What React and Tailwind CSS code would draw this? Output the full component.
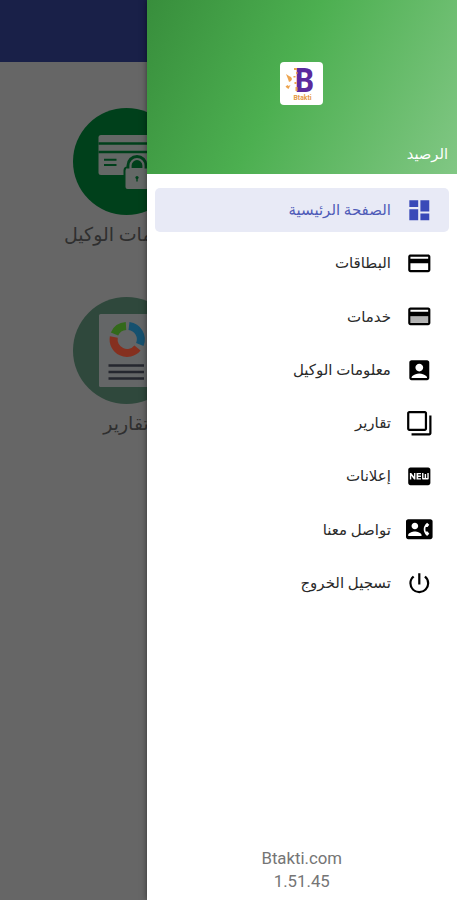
import {
  MdDashboard,
  MdOutlineCreditCard,
  MdAccountBox,
  MdFilterNone,
  MdFiberNew,
  MdContactPhone,
  MdPowerSettingsNew,
} from "react-icons/md";

function FilledCard({ className }) {
  return (
    <svg viewBox="0 0 24 24" fill="currentColor" className={className}>
      <path d="M4 12h16v6H4z" opacity="0.3" />
      <path d="M20 4H4c-1.110 0-1.990.890-1.990 2L2 18c0 1.110.890 2 2 2h16c1.110 0 2-.890 2-2V6c0-1.110-.890-2-2-2zm0 14H4v-6h16v6zm0-10H4V6h16v2z" />
    </svg>
  );
}

const MENU = [
  { label: "الصفحة الرئيسية", icon: MdDashboard, active: true, flip: true },
  { label: "البطاقات", icon: MdOutlineCreditCard },
  { label: "خدمات", icon: FilledCard },
  { label: "معلومات الوكيل", icon: MdAccountBox },
  { label: "تقارير", icon: MdFilterNone, flip: true },
  { label: "إعلانات", icon: MdFiberNew },
  { label: "تواصل معنا", icon: MdContactPhone },
  { label: "تسجيل الخروج", icon: MdPowerSettingsNew },
];

function Logo() {
  return (
    <svg viewBox="0 0 43 43" direction="ltr" className="w-[43px] h-[43px]">
      <rect width="43" height="43" rx="4" fill="#fff" />
      <text
        x="15"
        y="29.5"
        fontFamily="Roboto, sans-serif"
        fontSize="33"
        fontWeight="800"
        fill="#5b2a9d"
        textLength="19"
        lengthAdjust="spacingAndGlyphs"
      >
        B
      </text>
      <g fill="#eda550">
        <path d="M6 12l3 2 2 1 1 2-1 2-2 1-1-3z" />
        <path d="M5.500 24.500l2-1.500 1 1 2-1-1 2-1 2-1.500-1z" />
        <path d="M14 6h3v2h-3zM16 10h1.500v2h-1.500zM13.500 14h2v1.500h-2zM14.500 20h2v2h-2zM15.500 25h2v4h-2z" />
      </g>
      <text
        x="13.500"
        y="37.500"
        fontFamily="Roboto, sans-serif"
        fontSize="7"
        fontWeight="700"
        fill="#e59a45"
        textLength="18"
        lengthAdjust="spacingAndGlyphs"
      >
        Btakti
      </text>
    </svg>
  );
}

function CardLockArt() {
  return (
    <svg viewBox="0 0 107 107" className="w-[107px] h-[107px]">
      <circle cx="53.5" cy="53.5" r="53.5" fill="#00401b" />
      <rect x="25.5" y="27" width="62" height="40" rx="2.500" fill="#646866" />
      <path d="M25.5 35.5h62M25.5 44h62" stroke="#00401b" strokeWidth="2.4" />
      <path d="M31 51.800h12.5M31 57h12.5" stroke="#00401b" strokeWidth="2" />
      <rect x="51.500" y="59.500" width="25" height="22.500" rx="3" fill="#646866" stroke="#00401b" strokeWidth="2" />
      <path d="M56 61v-3.500a8 8 0 0 1 16 0V61" fill="none" stroke="#00401b" strokeWidth="5" />
      <path d="M57.500 61v-3.500a6.500 6.500 0 0 1 13 0V61z" fill="#00401b" stroke="#646866" strokeWidth="2.200" />
      <rect x="53" y="60.500" width="22" height="6" fill="#646866" />
      <circle cx="64" cy="69.500" r="1.600" fill="#00401b" />
      <path d="M63.300 70h1.400v3.500h-1.400z" fill="#00401b" />
    </svg>
  );
}

function ReportArt() {
  return (
    <svg viewBox="0 0 107 107" className="w-[107px] h-[107px]">
      <circle cx="53.5" cy="53.5" r="53.5" fill="#2f483c" />
      <rect x="26" y="17" width="56" height="73" rx="1.500" fill="#646667" />
      <g fill="none" strokeWidth="8" transform="translate(54 42.500)">
        <path d="M-12.500 -5.500A13.500 13.500 0 0 1 -1 -13.500" stroke="#33691a" />
        <path d="M2 -13.500A13.500 13.500 0 0 1 12.800 5" stroke="#16516f" />
        <path d="M10.500 8.500A13.500 13.500 0 0 1 -13.200 -2.500" stroke="#85301f" />
      </g>
      <path
        d="M35.500 68.500h35.500M35.500 75h35.500M35.500 81.500h35.500"
        stroke="#25272f"
        strokeWidth="2.600"
      />
    </svg>
  );
}

function Tile({ art, label }) {
  return (
    <div className="flex flex-col items-center h-[188.5px]">
      {art}
      <span dir="rtl" className="mt-[2px] text-[19px] leading-[36px] whitespace-nowrap text-[#2f2f2f]">
        {label}
      </span>
    </div>
  );
}

function MenuItem({ label, icon: Icon, active, flip }) {
  return (
    <li
      className={`flex items-center h-[44px] rounded-[5px] pr-4 ${
        active ? "bg-[#e8eaf6] text-[#4f5bb8]" : "text-[#2a2a2a]"
      }`}
    >
      <Icon
        className={`w-[26.6px] h-[26.6px] shrink-0 ${flip ? "-scale-x-100" : ""} ${
          active ? "text-[#3949b8]" : "text-black"
        }`}
      />
      <span className="mr-[15.5px] text-[15px] leading-6 whitespace-nowrap">{label}</span>
    </li>
  );
}

export default function App() {
  return (
    <div
      dir="rtl"
      className="flex w-[457px] h-[900px] overflow-hidden bg-[#666] font-['Roboto','DejaVu_Sans',sans-serif]"
    >
      {/* Drawer */}
      <aside className="relative z-10 flex flex-col w-[310.5px] shrink-0 bg-white shadow-[0_0_6px_rgba(0,0,0,0.5)]">
        <header className="flex flex-col items-center h-[174px] pt-[62px] bg-[linear-gradient(117deg,#388e3c_0%,#4caf50_44%,#81c784_100%)]">
          <Logo />
          <span className="self-start mt-[37px] mr-[9px] text-[14.7px] leading-6 text-white">
            الرصيد
          </span>
        </header>

        <ul className="flex flex-col gap-[9.3px] pt-[14px] pr-2 pl-[8.5px]">
          {MENU.map((item) => (
            <MenuItem key={item.label} {...item} />
          ))}
        </ul>

        <footer className="mt-auto pb-[7px] text-center text-[16.8px] leading-[23px] text-[#757575]">
          <p dir="ltr">Btakti.com</p>
          <p dir="ltr">1.51.45</p>
        </footer>
      </aside>

      {/* Dimmed page behind the drawer */}
      <main dir="ltr" className="flex-1 min-w-0">
        <div className="h-[62px] bg-[#192048]" />
        <div className="w-[122px] ml-[65px] pt-[46px]">
          <Tile art={<CardLockArt />} label="معلومات الوكيل" />
          <Tile art={<ReportArt />} label="تقارير" />
        </div>
      </main>
    </div>
  );
}
